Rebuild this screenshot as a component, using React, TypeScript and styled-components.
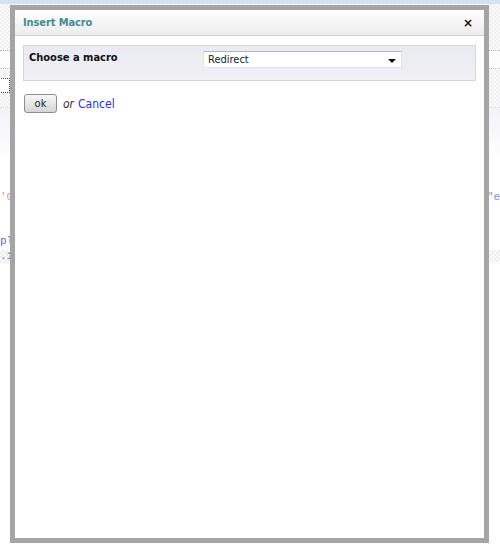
import React from "react";
import styled, { createGlobalStyle } from "styled-components";

const GlobalStyle = createGlobalStyle`
  html, body { margin: 0; padding: 0; background: #ffffff; }
  body { font-family: "DejaVu Sans Condensed", "DejaVu Sans", sans-serif; }
  #root { width: 500px; height: 555px; }
`;

const Page = styled.div`
  position: relative;
  width: 500px;
  height: 555px;
  overflow: hidden;
  background: #ffffff;
  display: flex;
  flex-direction: column;
`;

const TopBar = styled.div`
  height: 4px;
  background: #d4e3f3;
`;

const Checkered = styled.div<{ $h: number; $dotted?: boolean }>`
  height: ${(p) => p.$h}px;
  background-color: #fbfbfb;
  background-image: repeating-conic-gradient(#efefef 0% 25%, #fbfbfb 0% 50%);
  background-size: 4px 4px;
  border-bottom: ${(p) => (p.$dotted ? "1px dotted #b9b9b9" : "none")};
  position: relative;
`;

const PlainBand = styled.div<{ $h: number }>`
  height: ${(p) => p.$h}px;
  background: #fdfdfd;
  border-bottom: 1px dotted #c4c4c4;
`;

const FocusBox = styled.div`
  position: absolute;
  left: -4px;
  top: 9px;
  width: 12px;
  height: 13px;
  border: 1px dotted #444;
  background: #fff;
`;

const LavenderBand = styled.div`
  height: 52px;
  border-top: 1px dotted #dcdcdc;
  background: linear-gradient(#f2f2f8, #ffffff);
`;

const CodeLine = styled.div<{ $color: string; $top: number; $checked?: boolean }>`
  margin-top: ${(p) => p.$top}px;
  height: 13px;
  font-family: "Liberation Mono", monospace;
  font-size: 11px;
  line-height: 13px;
  color: ${(p) => p.$color};
  opacity: 0.75;
  white-space: pre;
  display: flex;
  justify-content: space-between;
  background-image: ${(p) =>
    p.$checked ? "repeating-conic-gradient(#e6e6e6 0% 25%, #ffffff 0% 50%)" : "none"};
  background-size: 4px 4px;
`;

const Dialog = styled.div`
  position: absolute;
  left: 10px;
  top: 5px;
  width: 479px;
  height: 538px;
  box-sizing: border-box;
  border: 5px solid #a5a5a5;
  background: #ffffff;
  display: flex;
  flex-direction: column;
`;

const Header = styled.div`
  height: 25px;
  border-bottom: 1px solid #cfcfcf;
  background: linear-gradient(#ffffff, #ececec);
  display: flex;
  align-items: center;
  justify-content: space-between;
  padding: 0 11px 0 8px;
`;

const Title = styled.span`
  font-size: 11px;
  font-weight: bold;
  color: #3f8c92;
  letter-spacing: -0.1px;
`;

const Close = styled.span`
  font-family: "DejaVu Sans", sans-serif;
  font-size: 12px;
  font-weight: bold;
  color: #111;
  line-height: 1;
`;

const Body = styled.div`
  padding: 9px 8px 0 8px;
  display: flex;
  flex-direction: column;
`;

const Panel = styled.div`
  height: 36px;
  box-sizing: border-box;
  border: 1px solid #d4d4da;
  background: linear-gradient(#eaeaf2, #f0f0f5);
  display: grid;
  grid-template-columns: 174px 199px;
  align-items: start;
  padding: 5px 0 0 5px;
`;

const Label = styled.span`
  font-size: 11px;
  font-weight: bold;
  color: #111;
  line-height: 14px;
`;

const Select = styled.div`
  height: 17px;
  box-sizing: border-box;
  background: #ffffff;
  border: 1px solid #e2e2e8;
  border-top-color: #b4b4bc;
  display: flex;
  align-items: center;
  justify-content: space-between;
  padding: 0 5px 0 4px;
  font-size: 11px;
  color: #222;
`;

const Arrow = styled.span`
  width: 0;
  height: 0;
  border-left: 4px solid transparent;
  border-right: 4px solid transparent;
  border-top: 4px solid #111;
  margin-top: 2px;
`;

const Actions = styled.div`
  margin-top: 13px;
  padding-left: 1px;
  display: flex;
  align-items: center;
  gap: 6px;
`;

const Button = styled.button`
  width: 33px;
  height: 19px;
  box-sizing: border-box;
  border: 1px solid #8e8e8e;
  border-radius: 3px;
  background: linear-gradient(#f7f7f7, #d6d6d6);
  font-family: "DejaVu Sans Condensed", "DejaVu Sans", sans-serif;
  font-size: 11px;
  color: #222;
  padding: 0;
`;

const Or = styled.span`
  font-size: 12px;
  font-style: italic;
  color: #333;
`;

const CancelLink = styled.a`
  font-size: 12px;
  color: #2c2cf0;
  text-decoration: none;
  margin-left: -2px;
`;

export default function App() {
  return (
    <>
      <GlobalStyle />
      <Page>
        <TopBar />
        <Checkered $h={46} $dotted />
        <PlainBand $h={17} />
        <Checkered $h={38}>
          <FocusBox />
        </Checkered>
        <LavenderBand />
        <CodeLine $color="#e06a6a" $top={31}>
          <span>{"'C"}</span>
          <span style={{ color: "#5a5ae0" }}>{'"e'}</span>
        </CodeLine>
        <CodeLine $color="#2a2ad8" $top={31}>
          <span>{"pl"}</span>
        </CodeLine>
        <CodeLine $color="#2a2ad8" $top={2} $checked>
          <span>{".1"}</span>
        </CodeLine>
        <Dialog>
          <Header>
            <Title>Insert Macro</Title>
            <Close>×</Close>
          </Header>
          <Body>
            <Panel>
              <Label>Choose a macro</Label>
              <Select>
                <span>Redirect</span>
                <Arrow />
              </Select>
            </Panel>
            <Actions>
              <Button>ok</Button>
              <Or>or</Or>
              <CancelLink href="#">Cancel</CancelLink>
            </Actions>
          </Body>
        </Dialog>
      </Page>
    </>
  );
}
